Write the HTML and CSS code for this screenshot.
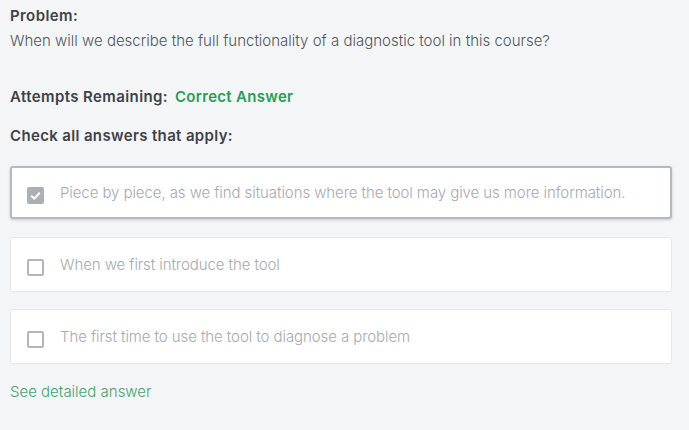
FILE: index.html
```html
<!DOCTYPE html>
<html>
<head>
<meta charset="utf-8">
<link rel="stylesheet" href="styles.css">
</head>
<body>
<div class="problem">
  <div class="label">Problem:</div>
  <div class="question">When will we describe the full functionality of a diagnostic tool in this course?</div>
  <div class="attempts"><span class="label">Attempts Remaining:</span> <span class="correct">Correct Answer</span></div>
  <div class="instr">Check all answers that apply:</div>
  <div class="options">
    <div class="option selected">
      <span class="box checked"><svg viewBox="0 0 17 17" width="17" height="17"><path d="M4.2 8.8 L7.2 11.6 L12.8 5.8" fill="none" stroke="#fff" stroke-width="2"/></svg></span>
      <span class="otext">Piece by piece, as we find situations where the tool may give us more information.</span>
    </div>
    <div class="option">
      <span class="box"></span>
      <span class="otext">When we first introduce the tool</span>
    </div>
    <div class="option">
      <span class="box"></span>
      <span class="otext">The first time to use the tool to diagnose a problem</span>
    </div>
  </div>
  <a class="detail">See detailed answer</a>
</div>
</body>
</html>
```
FILE: styles.css
```css
html, body {
  margin: 0;
  background: #f4f5f7;
}
body {
  font-family: Inter, Roboto, "Liberation Sans", sans-serif;
  font-size: 15px;
  font-weight: 300;
  color: #50555b;
}
.problem {
  width: 662px;
  padding: 6px 0 0 10px;
}
.label {
  font-weight: 600;
  letter-spacing: 0.4px;
  color: #3e4247;
  line-height: 20px;
}
.question {
  line-height: 20px;
  margin-top: 5px;
}
.attempts {
  margin-top: 36px;
  line-height: 20px;
  display: flex;
  gap: 7px;
}
.correct {
  color: #2a9c55;
  font-weight: 600;
  letter-spacing: 0.3px;
}
.instr {
  font-weight: 600;
  letter-spacing: 0.35px;
  color: #3e4247;
  line-height: 20px;
  margin-top: 19px;
}
.options {
  margin-top: 20px;
  display: flex;
  flex-direction: column;
  gap: 17px;
}
.option {
  box-sizing: border-box;
  height: 55px;
  background: #fff;
  border: 1px solid #e6e8ea;
  border-radius: 3px;
  display: flex;
  align-items: center;
  padding-left: 16px;
  gap: 16px;
  color: #a6aaae;
}
.option.selected {
  height: 53px;
  border: 2px solid #b6babe;
  box-shadow: 0 1px 3px rgba(0,0,0,0.18);
  padding-left: 15px;
  margin-bottom: 1px;
}
.otext {
  letter-spacing: -0.08px;
}
.box {
  box-sizing: border-box;
  width: 17px;
  height: 17px;
  margin-top: 6px;
  border: 2px solid #b2b5b9;
  border-radius: 2px;
  background: #fff;
  flex: none;
  display: block;
}
.box.checked {
  background: #abb0b5;
  border-color: #abb0b5;
}
.box svg {
  display: block;
  margin: -2px;
}
.detail {
  display: block;
  margin-top: 18px;
  color: #48a06e;
  line-height: 20px;
}
```
